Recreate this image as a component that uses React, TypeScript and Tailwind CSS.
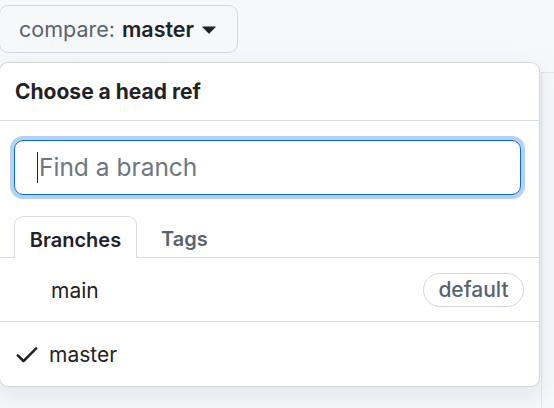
export default function App() {
  return (
    <div className="relative w-[554px] h-[408px] overflow-hidden bg-[#f6f8fa] font-['Inter','Liberation_Sans',sans-serif] text-[#1f2328]">
      {/* compare button */}
      <div className="pt-[5px]">
        <button className="-ml-px flex h-[48px] w-[239px] items-center rounded-[9px] border border-[#d0d7de] bg-[#f6f8fa] pl-[19px] pt-px text-[21.5px]">
          <span className="text-[#59636e]">compare:</span>
          <span className="ml-[7px] font-semibold text-[#1f2328]">master</span>
          <svg className="ml-[8px]" width="14" height="8" viewBox="0 0 14 8">
            <path d="M0.8 0.5h12.4a0.5 0.5 0 0 1 .35.85L7.35 7.4a0.5 0.5 0 0 1-.7 0L0.45 1.35A0.5 0.5 0 0 1 .8 0.5Z" fill="#1f2328" />
          </svg>
        </button>
      </div>

      {/* page content behind popover */}
      <div className="ml-[541px] mt-[19px] h-[400px] border-l border-t border-[#e1e5ea] bg-[#f6f8fa]" />

      {/* popover */}
      <div className="absolute left-[-1px] top-[62px] w-[541px] h-[325px] rounded-[9px] border border-[#d0d7de] bg-white shadow-[0_8px_24px_rgba(140,149,159,0.2)] overflow-hidden">
        <div className="flex h-[58px] items-center border-b border-[#d8dee4] px-[15px] pt-px text-[21px] font-bold">
          Choose a head ref
        </div>

        <div className="pl-[14px] pr-[18px] pt-[19px]">
          <div className="flex h-[55px] items-center rounded-[9px] border border-[#0969da] pl-[22px] shadow-[0_0_0_4px_#b4d2f4]">
            <span className="h-[31px] w-px bg-[#1f2328]" />
            <span className="ml-px text-[24.5px] text-[#6e7781]">Find a branch</span>
          </div>
        </div>

        <div className="mt-[21px] flex items-end border-b border-[#d8dee4] pl-[14px]">
          <div className="-mb-px flex h-[42px] w-[123px] items-center justify-center rounded-t-[9px] border border-b-white border-[#d8dee4] bg-white pt-[5px] text-[20px] font-semibold">
            Branches
          </div>
          <div className="flex h-[41px] items-center pl-[24px] pt-[5px] text-[20px] font-semibold text-[#59636e]">
            Tags
          </div>
        </div>

        <div className="flex h-[64px] items-center justify-between border-b border-[#d8dee4] pl-[51px] pr-[15px] text-[21px]">
          <span className="pt-[3px]">main</span>
          <span className="flex h-[34px] w-[101px] items-center justify-center rounded-full border border-[#d0d7de] pt-px text-[21px] font-medium text-[#59636e]">
            default
          </span>
        </div>

        <div className="flex h-[63px] items-center pl-[13px] text-[21px]">
          <svg width="28" height="28" viewBox="0 0 16 16" fill="#1f2328">
            <path d="M13.78 4.22a.75.75 0 0 1 0 1.06l-7.25 7.25a.75.75 0 0 1-1.06 0L2.22 9.28a.751.751 0 0 1 .018-1.042.751.751 0 0 1 1.042-.018L6 10.94l6.72-6.72a.75.75 0 0 1 1.06 0Z" />
          </svg>
          <span className="ml-[8px] pt-[3px]">master</span>
        </div>
      </div>
    </div>
  );
}
